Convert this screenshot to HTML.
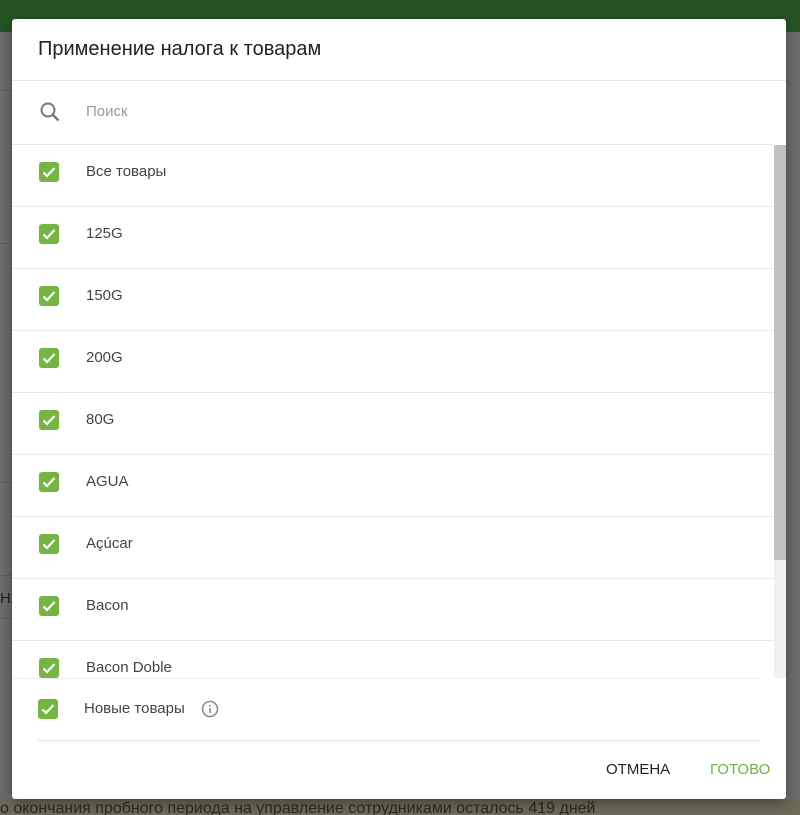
<!DOCTYPE html>
<html><head><meta charset="utf-8"><style>
*{box-sizing:border-box;margin:0;padding:0}
body{width:800px;height:815px;overflow:hidden;background:#6e6e6e;font-family:"Liberation Sans",Roboto,sans-serif;position:relative}
.top{position:absolute;left:0;top:0;width:800px;height:32px;background:#265326}
.bot{position:absolute;left:0;top:799px;width:800px;height:16px;background:#6e6b58;color:#2a2a22;font-size:16px;line-height:20px;white-space:nowrap;overflow:hidden}
.ln{position:absolute;left:0;width:12px;height:1px;background:#5f5f5f}
.modal{position:absolute;left:12px;top:19px;width:774px;height:780px;background:#fff;border-radius:3px;overflow:hidden;box-shadow:0 4px 14px rgba(0,0,0,.4)}
h1{font-weight:normal;font-size:20px;color:#222;position:absolute;left:26px;top:19px}
.hdiv{position:absolute;left:0;top:61px;width:774px;height:1px;background:#e8e8e8}
.search{position:absolute;left:74px;top:84px;font-size:15px;color:#999}
.list{position:absolute;left:0;top:125px;width:762px;height:534px;overflow:hidden}
.row{height:62px;border-top:1px solid #e8e8e8;position:relative}
.cb{position:absolute;left:27px;top:17px;width:20px;height:20px;background:#76b443;border-radius:3px}
.cb svg{position:absolute;left:3px;top:3px}
.lbl{position:absolute;left:74px;top:17px;font-size:15px;color:#444;line-height:20px}
.sb{position:absolute;left:762px;top:126px;width:12px;height:533px;background:#f1f1f1}
.th{position:absolute;left:0;top:0;width:12px;height:415px;background:#c1c1c1}
.new{position:absolute;left:0;top:659px;width:748px;height:62px;border-top:1px solid #ececec}
.new .cb{left:26px;top:20px}.new .lbl{left:72px;top:20px}
.ndiv{position:absolute;left:26px;top:721px;width:722px;height:1px;background:#e0e0e0}
.btn{position:absolute;top:742px;font-size:15px;line-height:18px}
</style></head><body>
<div class="top"></div>
<div class="ln" style="top:90px"></div><div class="ln" style="top:243px"></div><div class="ln" style="top:482px"></div><div class="ln" style="top:575px"></div><div class="ln" style="top:618px"></div>
<div style="position:absolute;left:0;top:590px;font-size:15px;color:#222">НА</div>
<div class="bot">о окончания пробного периода на управление сотрудниками осталось 419 дней</div>
<div class="modal">
<h1>Применение налога к товарам</h1>
<div class="hdiv"></div>
<svg style="position:absolute;left:27px;top:82px" width="22" height="22" viewBox="0 0 22 22"><circle cx="9" cy="9" r="6.5" fill="none" stroke="#777" stroke-width="2"/><path d="M13.5 13.5l6 6" stroke="#777" stroke-width="2.4"/></svg>
<div class="search">Поиск</div>
<div class="list">
<div class="row"><div class="cb"><svg width="14" height="14" viewBox="0 0 14 14"><path d="M1.5 7.5l3.5 3.5 7.5-8" fill="none" stroke="#fff" stroke-width="2.2"/></svg></div><div class="lbl">Все товары</div></div>
<div class="row"><div class="cb"><svg width="14" height="14" viewBox="0 0 14 14"><path d="M1.5 7.5l3.5 3.5 7.5-8" fill="none" stroke="#fff" stroke-width="2.2"/></svg></div><div class="lbl">125G</div></div>
<div class="row"><div class="cb"><svg width="14" height="14" viewBox="0 0 14 14"><path d="M1.5 7.5l3.5 3.5 7.5-8" fill="none" stroke="#fff" stroke-width="2.2"/></svg></div><div class="lbl">150G</div></div>
<div class="row"><div class="cb"><svg width="14" height="14" viewBox="0 0 14 14"><path d="M1.5 7.5l3.5 3.5 7.5-8" fill="none" stroke="#fff" stroke-width="2.2"/></svg></div><div class="lbl">200G</div></div>
<div class="row"><div class="cb"><svg width="14" height="14" viewBox="0 0 14 14"><path d="M1.5 7.5l3.5 3.5 7.5-8" fill="none" stroke="#fff" stroke-width="2.2"/></svg></div><div class="lbl">80G</div></div>
<div class="row"><div class="cb"><svg width="14" height="14" viewBox="0 0 14 14"><path d="M1.5 7.5l3.5 3.5 7.5-8" fill="none" stroke="#fff" stroke-width="2.2"/></svg></div><div class="lbl">AGUA</div></div>
<div class="row"><div class="cb"><svg width="14" height="14" viewBox="0 0 14 14"><path d="M1.5 7.5l3.5 3.5 7.5-8" fill="none" stroke="#fff" stroke-width="2.2"/></svg></div><div class="lbl">Açúcar</div></div>
<div class="row"><div class="cb"><svg width="14" height="14" viewBox="0 0 14 14"><path d="M1.5 7.5l3.5 3.5 7.5-8" fill="none" stroke="#fff" stroke-width="2.2"/></svg></div><div class="lbl">Bacon</div></div>
<div class="row"><div class="cb"><svg width="14" height="14" viewBox="0 0 14 14"><path d="M1.5 7.5l3.5 3.5 7.5-8" fill="none" stroke="#fff" stroke-width="2.2"/></svg></div><div class="lbl">Bacon Doble</div></div>
</div>
<div class="sb"><div class="th"></div></div>
<div class="new"><div class="cb"><svg width="14" height="14" viewBox="0 0 14 14"><path d="M1.5 7.5l3.5 3.5 7.5-8" fill="none" stroke="#fff" stroke-width="2.2"/></svg></div><div class="lbl">Новые товары</div>
<svg style="position:absolute;left:189px;top:21px" width="18" height="18" viewBox="0 0 18 18"><circle cx="9" cy="9" r="7.5" fill="none" stroke="#888" stroke-width="1.5"/><rect x="8.2" y="8" width="1.6" height="5" fill="#888"/><rect x="8.2" y="5" width="1.6" height="1.6" fill="#888"/></svg></div>
<div class="ndiv"></div>
<div class="btn" style="left:594px;color:#222">ОТМЕНА</div>
<div class="btn" style="left:698px;color:#6db33f">ГОТОВО</div>
</div>
</body></html>
